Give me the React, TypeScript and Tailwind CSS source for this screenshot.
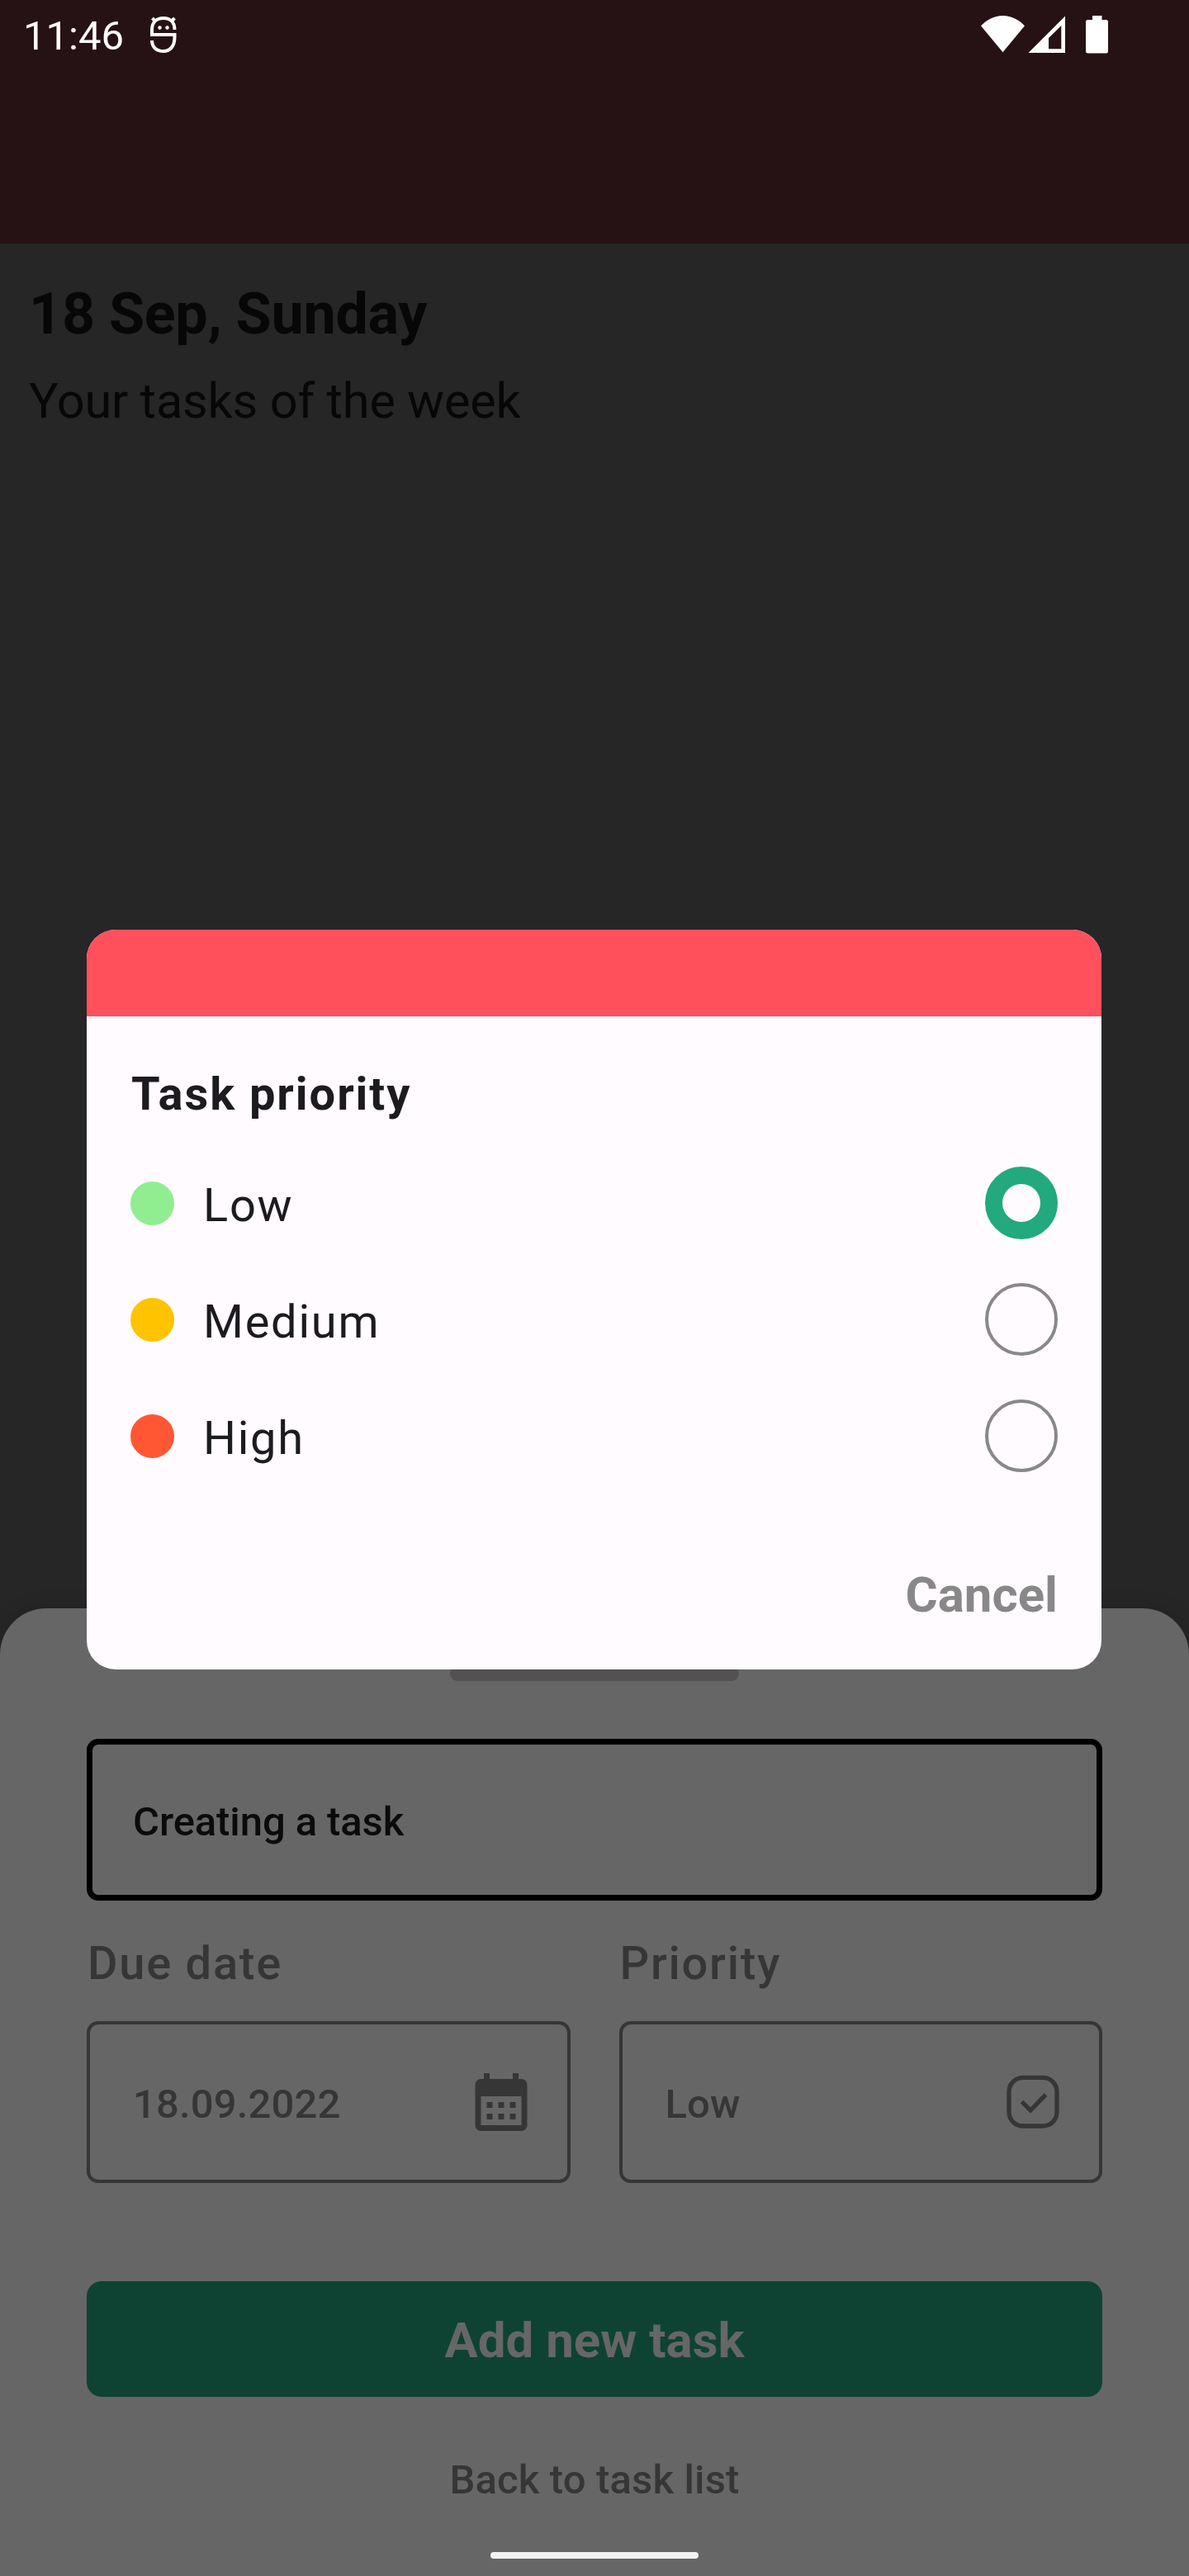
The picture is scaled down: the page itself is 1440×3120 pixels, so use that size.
import React from 'react';

const priorities = [
  { label: 'Low', dot: 'bg-[#90ee90]', selected: true },
  { label: 'Medium', dot: 'bg-[#ffc300]', selected: false },
  { label: 'High', dot: 'bg-[#ff5733]', selected: false },
];

function DebugIcon() {
  return (
    <svg className="block h-[46px] w-[34px]" viewBox="0 0 34 46" fill="none" stroke="#fff" strokeWidth="4">
      <path d="M30.500 18 C30.500 8.500 25 4 17 4 C9 4 3 8.500 3 18 V24 H30.500 V27 C30.500 38 25 44 17 44 C9 44 3 39.500 3 31" />
      <path d="M3.500 4 L8 8.500 M30.500 4 L26 8.500" />
      <circle cx="12.500" cy="15.500" r="2.200" fill="#fff" stroke="none" />
      <circle cx="21.500" cy="15.500" r="2.200" fill="#fff" stroke="none" />
    </svg>
  );
}

function StatusBar() {
  return (
    <div className="absolute inset-x-0 top-0 flex h-[84px] items-start pl-[28px] pr-[98px] text-white">
      <span className="mt-[15px] w-[152px] whitespace-nowrap text-[49px] leading-[58px]">11:46</span>
      <div className="ml-px mt-[18px]">
        <DebugIcon />
      </div>
      <div className="ml-auto mt-[19px] flex">
        <svg className="block h-[45px] w-[53px]" viewBox="0 0 53 45" fill="#fff">
          <path d="M0 12.300 C7 5 16 0 26.500 0 C37 0 46 5 53 12.300 L26.500 44.300 Z" />
        </svg>
        <svg className="ml-[4px] block h-[45px] w-[45px]" viewBox="0 0 45 45" fill="#fff">
          <path fillRule="evenodd" d="M45 .5 V45 H.5 Z M40.300 12 L25 27 V40.300 H40.300 Z" />
        </svg>
        <svg className="ml-[25px] block h-[46px] w-[27px]" viewBox="0 0 27 46" fill="#fff">
          <path d="M8 0 H19.500 V5 H24.500 Q27 5 27 7.500 V43 Q27 45.500 24.500 45.500 H2.500 Q0 45.500 0 43 V7.500 Q0 5 2.500 5 H8 Z" />
        </svg>
      </div>
    </div>
  );
}

function CalendarIcon() {
  return (
    <svg className="block size-[84px]" viewBox="0 0 24 24" fill="#363636">
      <path
        fillRule="evenodd"
        d="M6 2 H8 V4 H16 V2 H18 V4 H19 A2 2 0 0 1 21 6 V20 A2 2 0 0 1 19 22 H5 A2 2 0 0 1 3 20 V6 A2 2 0 0 1 5 4 H6 Z M5 10 V20 H19 V10 Z"
      />
      <path d="M7 12h2v2H7z M11 12h2v2h-2z M15 12h2v2h-2z M7 16h2v2H7z M11 16h2v2h-2z M15 16h2v2h-2z" />
    </svg>
  );
}

function CheckIcon() {
  return (
    <svg className="block size-[84px]" viewBox="0 0 84 84" fill="none" stroke="#363636" strokeWidth="5.300">
      <rect x="13" y="12.400" width="58" height="58.600" rx="17" />
      <path d="M28.500 41.500 L39 52 L57.500 33" />
    </svg>
  );
}

function PickerField({ label, value, icon }: { label: string; value: string; icon: React.ReactNode }) {
  return (
    <div>
      <div className="pl-px text-[56px] font-medium leading-[66px] tracking-[1.75px] text-[#363636]">{label}</div>
      <div className="mt-[37px] flex h-[196px] items-center justify-between rounded-[14px] border-4 border-[#363636] pl-[52px] pr-[38px]">
        <span className="pt-[5px] text-[49px] font-medium leading-[58px] tracking-[0.150px] text-[#363636]">{value}</span>
        {icon}
      </div>
    </div>
  );
}

function TaskSheet() {
  return (
    <section className="absolute inset-x-0 bottom-0 flex h-[1172px] flex-col rounded-t-[56px] bg-[#666666] px-[105px] pt-[70px] shadow-[0_0_24px_rgba(0,0,0,0.15)]">
      <div className="h-[18px] w-[350px] self-center rounded-[9px] bg-[#525252]" />
      <div className="mt-[70px] flex h-[196px] items-center rounded-[14px] border-[7px] border-black pl-[49px]">
        <span className="pt-[5px] text-[49px] font-medium leading-[58px] tracking-[-0.100px] text-[#0b0b0b]">Creating a task</span>
      </div>
      <div className="mt-[43px] grid grid-cols-2 gap-[59px]">
        <PickerField label="Due date" value="18.09.2022" icon={<CalendarIcon />} />
        <PickerField label="Priority" value="Low" icon={<CheckIcon />} />
      </div>
      <button className="mt-[119px] flex h-[140px] shrink-0 items-center justify-center rounded-[18px] bg-[#0e4333] pt-[4px] text-[60px] font-bold leading-[70px] text-[#666666]">
        Add new task
      </button>
      <button className="mt-[72px] text-center text-[49px] font-medium leading-[58px] tracking-[0.150px] text-[#363636]">
        Back to task list
      </button>
      <div className="mt-[58px] h-[8px] w-[252px] shrink-0 self-center rounded-full bg-[#f3f2f2]" />
    </section>
  );
}

function PriorityDialog() {
  return (
    <section className="absolute left-[105px] top-[1126px] flex h-[896px] w-[1229px] flex-col overflow-hidden rounded-[35px] bg-[#fffbff] text-[#1c1b1f]">
      <div className="h-[105px] shrink-0 bg-[#ff505c]" />
      <h2 className="ml-[54px] mt-[61px] text-[56px] font-bold leading-[66px] tracking-[1.950px]">Task priority</h2>
      <div className="mt-[55px] flex flex-col gap-[53px] pl-[53px] pr-[53px]">
        {priorities.map((p) => (
          <div key={p.label} className="flex h-[88px] items-center">
            <span className={`size-[53px] rounded-full ${p.dot}`} />
            <span className="ml-[35px] pt-[5px] text-[56px] leading-[66px] tracking-[1.750px]">{p.label}</span>
            <span
              className={`ml-auto size-[88px] rounded-full ${
                p.selected ? 'border-[21px] border-[#22a97e]' : 'border-4 border-[#888888]'
              }`}
            />
          </div>
        ))}
      </div>
      <button className="mr-[53px] mt-[114px] self-end text-[60px] font-bold leading-[70px] text-[#888888]">Cancel</button>
    </section>
  );
}

export default function App() {
  return (
    <div className="relative h-[3120px] w-[1440px] overflow-hidden bg-[#262626] font-['Roboto',sans-serif]">
      <div className="h-[295px] bg-[#261214]" />
      <main className="pl-[35px] pt-[44px] text-[#070707]">
        <h1 className="text-[70px] font-bold leading-[82px] tracking-[-0.250px]">18 Sep, Sunday</h1>
        <p className="mt-[30px] text-[59.500px] leading-[70px] tracking-[-0.180px]">Your tasks of the week</p>
      </main>
      <StatusBar />
      <TaskSheet />
      <PriorityDialog />
    </div>
  );
}
